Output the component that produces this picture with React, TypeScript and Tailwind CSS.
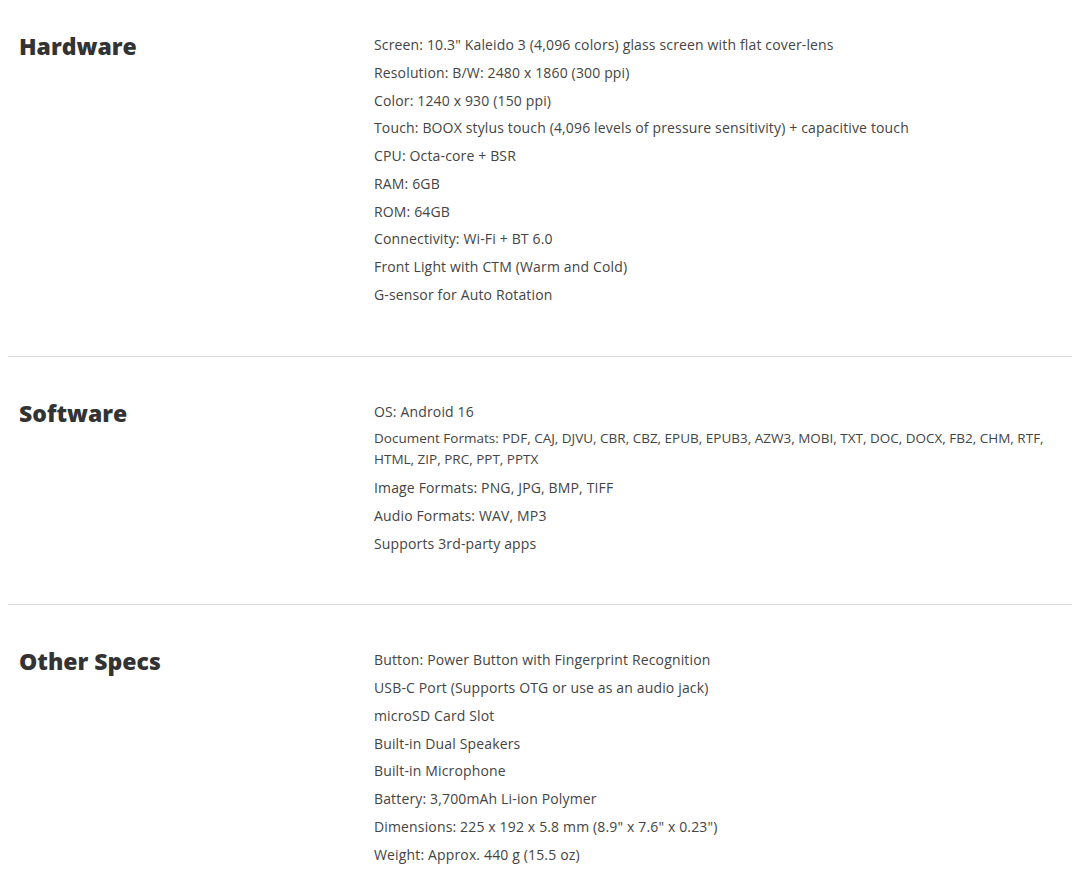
const sections = [
  {
    title: "Hardware",
    items: [
      'Screen: 10.3" Kaleido 3 (4,096 colors) glass screen with flat cover-lens',
      "Resolution: B/W: 2480 x 1860 (300 ppi)",
      "Color: 1240 x 930 (150 ppi)",
      "Touch: BOOX stylus touch (4,096 levels of pressure sensitivity) + capacitive touch",
      "CPU: Octa-core + BSR",
      "RAM: 6GB",
      "ROM: 64GB",
      "Connectivity: Wi-Fi + BT 6.0",
      "Front Light with CTM (Warm and Cold)",
      "G-sensor for Auto Rotation",
    ],
  },
  {
    title: "Software",
    items: [
      "OS: Android 16",
      "Document Formats: PDF, CAJ, DJVU, CBR, CBZ, EPUB, EPUB3, AZW3, MOBI, TXT, DOC, DOCX, FB2, CHM, RTF,|HTML, ZIP, PRC, PPT, PPTX",
      "Image Formats: PNG, JPG, BMP, TIFF",
      "Audio Formats: WAV, MP3",
      "Supports 3rd-party apps",
    ],
  },
  {
    title: "Other Specs",
    items: [
      "Button: Power Button with Fingerprint Recognition",
      "USB-C Port (Supports OTG or use as an audio jack)",
      "microSD Card Slot",
      "Built-in Dual Speakers",
      "Built-in Microphone",
      "Battery: 3,700mAh Li-ion Polymer",
      'Dimensions: 225 x 192 x 5.8 mm (8.9" x 7.6" x 0.23")',
      "Weight: Approx. 440 g (15.5 oz)",
    ],
  },
];

export default function App() {
  return (
    <div className="min-h-screen bg-white px-2 font-['Open_Sans',sans-serif]">
      {sections.map((s, i) => (
        <section
          key={s.title}
          className={
            i === 0
              ? "grid grid-cols-[355px_1fr] border-b border-[#dedede] pl-[11px] pt-[34px] pb-[44px]"
              : i === sections.length - 1
                ? "grid grid-cols-[355px_1fr] pl-[11px] pt-[44px] pb-[44px]"
                : "grid grid-cols-[355px_1fr] border-b border-[#dedede] pl-[11px] pt-[44px] pb-[44px]"
          }
        >
          <h2 className="text-[23px] leading-[24px] font-extrabold text-[#333333]">
            {s.title}
          </h2>
          <ul>
            {s.items.map((t) => {
              const parts = t.split("|");
              return (
                <li
                  key={t}
                  className={
                    parts.length > 1
                      ? "mb-[6.75px] text-[13.5px] leading-[21px] text-[#444444]"
                      : "mb-[6.75px] text-[14px] leading-[21px] tracking-[0.15px] text-[#444444]"
                  }
                >
                  {parts.length > 1 ? (
                    <>
                      <span className="whitespace-nowrap">{parts[0]}</span>
                      <br />
                      {parts[1]}
                    </>
                  ) : (
                    t
                  )}
                </li>
              );
            })}
          </ul>
        </section>
      ))}
    </div>
  );
}
